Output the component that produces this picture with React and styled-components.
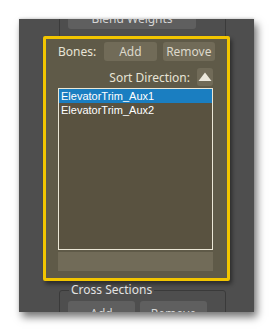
import React from 'react'
import styled, { createGlobalStyle } from 'styled-components'

const GlobalStyle = createGlobalStyle`
  html, body {
    margin: 0;
    background: #ffffff;
  }
  body {
    font-family: 'Noto Sans', 'DejaVu Sans', sans-serif;
  }
`

const Page = styled.div`
  width: 274px;
  height: 332px;
  padding: 19px 0 0 19px;
  box-sizing: border-box;
`

const Panel = styled.div`
  width: 235px;
  height: 293px;
  background: #4e4e4e;
  overflow: hidden;
  box-shadow: 3px 5px 8px rgba(0, 0, 0, 0.55), 0 -1px 2px rgba(0, 0, 0, 0.12);
`

const Scroller = styled.div`
  display: flex;
  flex-direction: column;
  margin-top: -12px;
`

const TopGroup = styled.div`
  margin-left: 40px;
  width: 157px;
  border-left: 1px solid #3b3b3b;
  border-right: 1px solid #3b3b3b;
  padding: 0 0 7px 8px;
`

const GreyButton = styled.div`
  width: ${p => p.$w}px;
  height: ${p => p.$h || 22}px;
  flex-shrink: 0;
  background: #5f5f5f;
  border-radius: 3px;
  color: #d4d4d4;
  font-size: 12px;
  display: flex;
  align-items: center;
  justify-content: center;
`

const Highlight = styled.div`
  margin-left: 24px;
  width: 187px;
  height: 245px;
  box-sizing: border-box;
  border: 3px solid #f2c500;
  border-radius: 2px;
  background: #5f5a48;
  box-shadow: 2px 3px 4px rgba(0, 0, 0, 0.45);
  padding: 3px 14px 6px 12px;
  display: flex;
  flex-direction: column;
`

const Row = styled.div`
  display: flex;
  align-items: center;
  justify-content: ${p => p.$end ? 'flex-end' : 'flex-start'};
  margin-top: ${p => p.$top || 0}px;
  width: 157px;
`

const Label = styled.span`
  color: #e8e4d6;
  font-size: 12px;
  margin-right: ${p => p.$mr || 0}px;
`

const OliveButton = styled.div`
  width: ${p => p.$w}px;
  height: ${p => p.$h}px;
  margin-left: ${p => p.$ml || 0}px;
  margin-right: ${p => p.$mr || 0}px;
  background: #716b58;
  border-radius: 3px;
  color: #dcd8cb;
  font-size: 12px;
  display: flex;
  align-items: center;
  justify-content: center;
`

const ListBox = styled.div`
  margin-top: 2px;
  width: 153px;
  height: 160px;
  border: 1px solid #ebe7d6;
  background: #595240;
  font-family: 'Liberation Sans', Arial, sans-serif;
  font-size: 11px;
`

const Item = styled.div`
  height: 14px;
  line-height: 14px;
  padding-left: 2px;
  color: #ffffff;
  background: ${p => p.$selected ? '#1a7ec1' : 'transparent'};
`

const Field = styled.div`
  margin-top: 2px;
  width: 155px;
  height: 19px;
  background: #716b58;
`

const Group = styled.fieldset`
  margin: 2px 0 0 40px;
  width: 157px;
  height: 40px;
  border: 1px solid #3a3a3a;
  border-radius: 3px;
  padding: 4px 0 0 8px;
  display: flex;
  gap: 5px;

  legend {
    color: #e2e2e2;
    font-size: 12px;
    padding: 0 2px;
    margin-left: 1px;
    line-height: 14px;
  }
`

const SortArrow = () => (
  <svg width="14" height="10" viewBox="0 0 14 10">
    <polygon points="7,0.5 13.5,9 0.5,9" fill="#ece8dc" />
  </svg>
)

export default function App() {
  return (
    <Page>
      <GlobalStyle />
      <Panel>
        <Scroller>
          <TopGroup>
            <GreyButton $w={128}>Blend Weights</GreyButton>
          </TopGroup>
          <Highlight>
            <Row>
              <Label $mr={8}>Bones:</Label>
              <OliveButton $w={54} $h={19}>Add</OliveButton>
              <OliveButton $w={54} $h={19} $ml={6}>Remove</OliveButton>
            </Row>
            <Row $end $top={7}>
              <Label $mr={7}>Sort Direction:</Label>
              <OliveButton $w={16} $h={18} $mr={2}>
                <SortArrow />
              </OliveButton>
            </Row>
            <ListBox>
              <Item $selected>ElevatorTrim_Aux1</Item>
              <Item>ElevatorTrim_Aux2</Item>
            </ListBox>
            <Field />
          </Highlight>
          <Group>
            <legend>Cross Sections</legend>
            <GreyButton $w={67} $h={24}>Add</GreyButton>
            <GreyButton $w={67} $h={24}>Remove</GreyButton>
          </Group>
        </Scroller>
      </Panel>
    </Page>
  )
}
